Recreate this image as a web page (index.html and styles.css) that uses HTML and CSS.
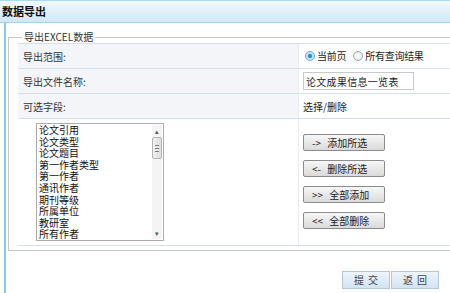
FILE: index.html
```html
<!DOCTYPE html>
<html lang="zh-CN">
<head>
    <meta charset="UTF-8">
    <title>数据导出</title>
    <link rel="stylesheet" href="styles.css">
</head>
<body>
    <div class="header">数据导出</div>
    <div class="main">
        <fieldset class="box">
            <legend>导出EXCEL数据</legend>
            <table class="form">
                <tr>
                    <td class="label">导出范围:</td>
                    <td class="value">
                        <label class="radio"><span class="dot checked"></span>当前页</label>
                        <label class="radio"><span class="dot"></span>所有查询结果</label>
                    </td>
                </tr>
                <tr>
                    <td class="label">导出文件名称:</td>
                    <td class="value"><input class="text" type="text" value="论文成果信息一览表"></td>
                </tr>
                <tr>
                    <td class="label">可选字段:</td>
                    <td class="value">选择/删除</td>
                </tr>
                <tr class="tall">
                    <td class="label plain">
                        <div class="listbox">
                            <ul class="items">
                                <li>论文引用</li>
                                <li>论文类型</li>
                                <li>论文题目</li>
                                <li>第一作者类型</li>
                                <li>第一作者</li>
                                <li>通讯作者</li>
                                <li>期刊等级</li>
                                <li>所属单位</li>
                                <li>教研室</li>
                                <li>所有作者</li>
                            </ul>
                            <div class="scrollbar">
                                <div class="arrow">&#9652;</div>
                                <div class="thumb"><span></span><span></span><span></span></div>
                                <div class="track"></div>
                                <div class="arrow">&#9662;</div>
                            </div>
                        </div>
                    </td>
                    <td class="value">
                        <div class="actions">
                            <button class="act">-&gt; 添加所选</button>
                            <button class="act">&lt;- 删除所选</button>
                            <button class="act">&gt;&gt; 全部添加</button>
                            <button class="act">&lt;&lt; 全部删除</button>
                        </div>
                    </td>
                </tr>
            </table>
        </fieldset>
        <div class="footer">
            <button class="btn">提 交</button>
            <button class="btn">返 回</button>
        </div>
    </div>
</body>
</html>
```

FILE: styles.css
```css
body {
    margin: 0;
    font-family: "Noto Sans CJK SC", "Liberation Sans", sans-serif;
    font-size: 10px;
    color: #222;
    background: #fff;
    overflow: hidden;
    width: 560px;
}
.header {
    height: 21px;
    line-height: 21px;
    padding-left: 2px;
    border-top: 1px solid #a8dcef;
    border-bottom: 1px solid #a8d4ea;
    background: linear-gradient(#f2f9fd, #cfe8f6);
    font-size: 11px;
    font-weight: bold;
    color: #111;
}
.main {
    margin-left: 4px;
    border-left: 2px solid #7ccfe5;
    padding: 8px 0 0 2px;
    height: 270px;
}
.box {
    margin: 0;
    padding: 0 0 4px 9px;
    border: 1px solid #c8c8c8;
}
.box legend {
    margin-left: 4px;
    padding: 0 2px;
    font-size: 10px;
    color: #333;
    line-height: 12px;
}
.form {
    width: 100%;
    border-collapse: collapse;
    border-top: 1px solid #d3e0ea;
}
.form td {
    border-bottom: 1px solid #d3e0ea;
    padding: 0;
    height: 24px;
}
.label {
    width: 275px;
    padding-left: 5px !important;
    background: #f3f5f8;
    border-right: 1px solid #e6ecf1;
    color: #333;
}
.label.plain {
    background: #fff;
    padding-left: 18px !important;
    width: 262px;
}
.tall td {
    height: 126px;
    vertical-align: top;
}
.value {
    padding-left: 4px !important;
}
.radio {
    display: inline-flex;
    align-items: center;
    margin-right: 3px;
    letter-spacing: -0.3px;
}
.dot {
    width: 10px;
    height: 10px;
    margin: 0 2px 0 2px;
    border-radius: 50%;
    border: 1px solid #9aa6b2;
    background: radial-gradient(#fff, #dfe3e8);
    box-sizing: border-box;
}
.dot.checked {
    background: radial-gradient(#2a8fd9 30%, #bfe0f7 45%, #e8f3fb);
    border-color: #6aa7d6;
}
.text {
    width: 105px;
    height: 16px;
    padding: 0 2px;
    margin: 0;
    border: 1px solid #c9c9c9;
    font-family: inherit;
    font-size: 10px;
    letter-spacing: 0.3px;
    color: #222;
}
.listbox {
    display: flex;
    margin-top: 4px;
    width: 126px;
    height: 116px;
    border: 1px solid #adadad;
    background: #fff;
}
.items {
    flex: 1;
    margin: 0;
    padding: 0 0 0 2px;
    list-style: none;
    line-height: 11.6px;
    color: #111;
    overflow: hidden;
}
.scrollbar {
    width: 10px;
    margin: 1px 1px 1px 0;
    display: flex;
    flex-direction: column;
    background: #f4f4f4;
}
.arrow {
    height: 12px;
    font-size: 7px;
    line-height: 12px;
    text-align: center;
    color: #555;
}
.thumb {
    height: 22px;
    border: 1px solid #b4b4b4;
    border-radius: 2px;
    background: linear-gradient(to right, #f2f2f2, #dcdcdc);
    display: flex;
    flex-direction: column;
    justify-content: center;
    align-items: center;
    gap: 2px;
    box-sizing: border-box;
}
.thumb span {
    width: 4px;
    height: 1px;
    background: #777;
}
.track {
    flex: 1;
}
.actions {
    display: flex;
    flex-direction: column;
    gap: 9px;
    padding-top: 15px;
}
.act {
    width: 82px;
    height: 17px;
    padding: 0 0 0 8px;
    border: 1px solid #8c8c8c;
    border-radius: 2px;
    background: linear-gradient(#f7f7f7, #dadada);
    font-family: inherit;
    font-size: 10px;
    line-height: 15px;
    text-align: left;
    color: #222;
    word-spacing: 4px;
}
.footer {
    display: flex;
    gap: 1px;
    padding: 20px 0 0 334px;
}
.btn {
    width: 48px;
    height: 18px;
    padding: 0;
    border: 1px solid #b3c6da;
    background: linear-gradient(#eef4fb, #d3e3f3);
    font-family: inherit;
    font-size: 10px;
    line-height: 16px;
    color: #444;
    word-spacing: 2px;
}
```
